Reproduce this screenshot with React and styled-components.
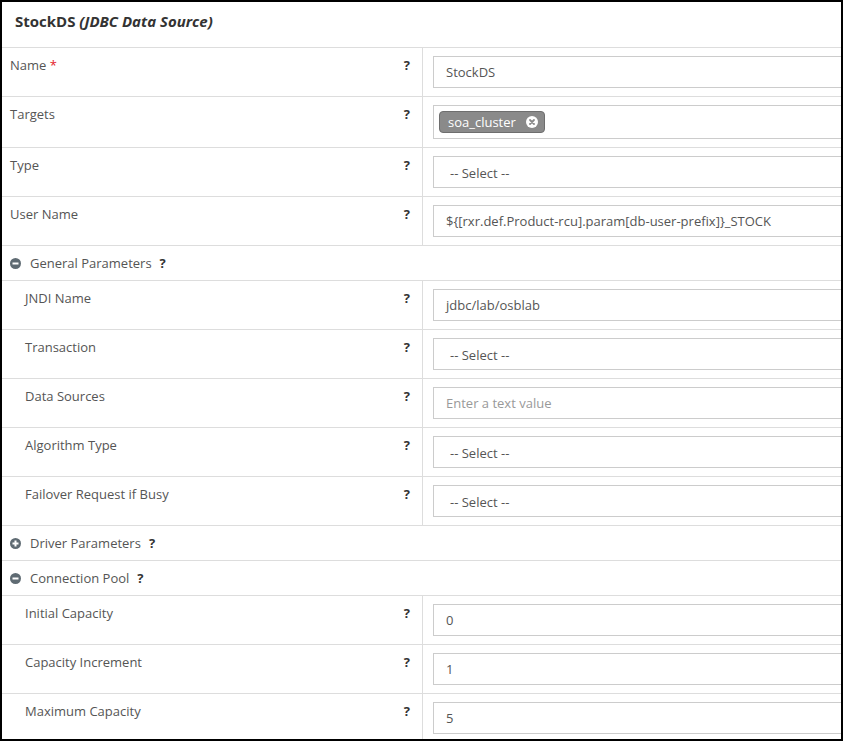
import React from 'react';
import styled, { createGlobalStyle } from 'styled-components';

const GlobalStyle = createGlobalStyle`
  * { box-sizing: border-box; }
  body {
    margin: 0;
    font-family: "Open Sans", "Liberation Sans", sans-serif;
    background: #fff;
  }
`;

const rows = [
  { type: 'field', label: 'Name', required: true, value: 'StockDS' },
  { type: 'tags', label: 'Targets', tags: ['soa_cluster'] },
  { type: 'field', label: 'Type', value: '-- Select --', select: true },
  { type: 'field', label: 'User Name', value: '${[rxr.def.Product-rcu].param[db-user-prefix]}_STOCK' },
  { type: 'section', label: 'General Parameters', open: true },
  { type: 'field', label: 'JNDI Name', value: 'jdbc/lab/osblab', nested: true },
  { type: 'field', label: 'Transaction', value: '-- Select --', select: true, nested: true },
  { type: 'field', label: 'Data Sources', placeholder: 'Enter a text value', nested: true },
  { type: 'field', label: 'Algorithm Type', value: '-- Select --', select: true, nested: true },
  { type: 'field', label: 'Failover Request if Busy', value: '-- Select --', select: true, nested: true },
  { type: 'section', label: 'Driver Parameters', open: false },
  { type: 'section', label: 'Connection Pool', open: true },
  { type: 'field', label: 'Initial Capacity', value: '0', nested: true },
  { type: 'field', label: 'Capacity Increment', value: '1', nested: true },
  { type: 'field', label: 'Maximum Capacity', value: '5', nested: true },
];

const ToggleIcon = ({ open }) => (
  <svg width="11" height="11" viewBox="0 0 11 11">
    <circle cx="5.5" cy="5.5" r="5.5" fill="#5f6b73" />
    <rect x="2.5" y="4.5" width="6" height="2" fill="#fff" />
    {!open && <rect x="4.5" y="2.5" width="2" height="6" fill="#fff" />}
  </svg>
);

const RemoveIcon = () => (
  <svg width="12" height="12" viewBox="0 0 12 12">
    <circle cx="6" cy="6" r="6" fill="#fff" />
    <path d="M4 4 L8 8 M8 4 L4 8" stroke="#8a8a8a" strokeWidth="1.8" strokeLinecap="round" />
  </svg>
);

const App = () => {
  return (
    <>
      <GlobalStyle />
      <Frame>
        <Header>
          <Title>
            StockDS <em>(JDBC Data Source)</em>
          </Title>
        </Header>
        {rows.map((row) => {
          if (row.type === 'section') {
            return (
              <Section key={row.label}>
                <ToggleIcon open={row.open} />
                <SectionTitle>{row.label}</SectionTitle>
                <Help>?</Help>
              </Section>
            );
          }
          return (
            <Row key={row.label}>
              <LabelCell $nested={row.nested}>
                <Label>
                  {row.label}
                  {row.required && <Required> *</Required>}
                </Label>
                <Help>?</Help>
              </LabelCell>
              <ValueCell>
                {row.type === 'tags' ? (
                  <TagBox>
                    {row.tags.map((t) => (
                      <Tag key={t}>
                        {t}
                        <RemoveIcon />
                      </Tag>
                    ))}
                  </TagBox>
                ) : (
                  <Input $placeholder={!!row.placeholder} $select={row.select}>
                    {row.value || row.placeholder}
                  </Input>
                )}
              </ValueCell>
            </Row>
          );
        })}
      </Frame>
    </>
  );
};

const Frame = styled.div`
  width: 843px;
  height: 741px;
  border: 2px solid #000;
  overflow: hidden;
  background: #fff;
`;

const Header = styled.div`
  height: 46px;
  border-bottom: 1px solid #ddd;
  padding: 9px 13px 0;
`;

const Title = styled.h2`
  margin: 0;
  font-size: 15px;
  font-weight: 700;
  color: #333;
  line-height: 20px;

  em {
    font-style: italic;
  }
`;

const Row = styled.div`
  display: grid;
  grid-template-columns: 421px 1fr;
  border-bottom: 1px solid #ddd;
`;

const LabelCell = styled.div`
  display: flex;
  justify-content: space-between;
  align-items: flex-start;
  padding: 8px 12px 8px ${(p) => (p.$nested ? '23px' : '8px')};
  border-right: 1px solid #ddd;
`;

const Label = styled.span`
  font-size: 13px;
  line-height: 18px;
  color: #555;
`;

const Required = styled.span`
  color: #e4202a;
`;

const Help = styled.span`
  font-size: 13px;
  font-weight: 700;
  line-height: 18px;
  color: #333;
`;

const ValueCell = styled.div`
  padding: 8px 0 8px 10px;
  min-width: 0;
`;

const Input = styled.div`
  width: 440px;
  height: 32px;
  border: 1px solid #ccc;
  padding: ${(p) => (p.$select ? '1px 16px 0' : '0 12px')};
  font-size: 13px;
  line-height: 30px;
  color: ${(p) => (p.$placeholder ? '#999' : '#555')};
  white-space: nowrap;
`;

const TagBox = styled.div`
  width: 440px;
  height: 34px;
  border: 1px solid #ccc;
  padding: 5px;
  display: flex;
  align-items: center;
`;

const Tag = styled.span`
  display: inline-flex;
  align-items: center;
  gap: 10px;
  height: 22px;
  padding: 0 6px 0 8px;
  background: #8a8a8a;
  border: 1px solid #6e6e6e;
  border-radius: 4px;
  color: #fff;
  font-size: 13px;
  line-height: 20px;
`;

const Section = styled.div`
  height: 35px;
  display: flex;
  align-items: center;
  gap: 9px;
  padding: 0 0 0 8px;
  border-bottom: 1px solid #ddd;
`;

const SectionTitle = styled.span`
  font-size: 13px;
  color: #555;
  margin-right: -1px;
`;

export default App;
